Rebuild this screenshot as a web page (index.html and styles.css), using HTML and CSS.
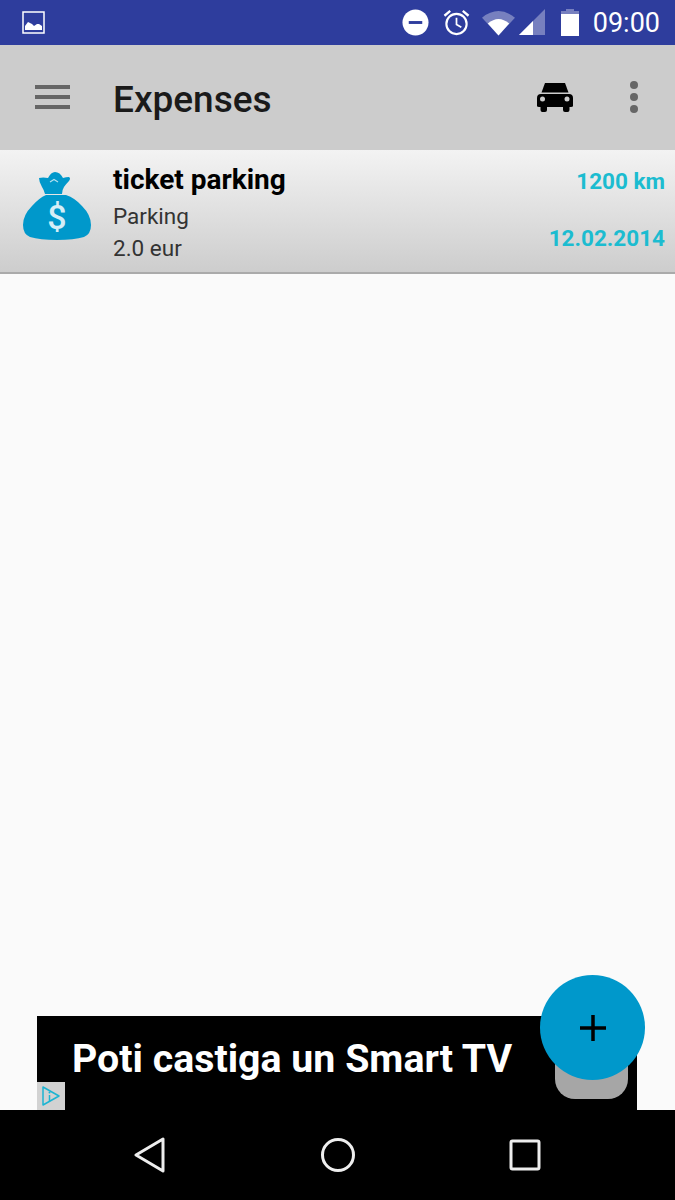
FILE: index.html
```html
<!DOCTYPE html>
<html lang="en">
<head>
    <meta charset="UTF-8">
    <meta name="viewport" content="width=device-width, initial-scale=1.0">
    <link rel="stylesheet" href="styles.css">
    <title>Expenses</title>
</head>
<body>
    <div class="screen">
        <div class="status-bar">
            <svg class="status-picture" width="24" height="24" viewBox="0 0 24 24">
                <rect x="1" y="1" width="21" height="21" fill="none" stroke="#fff" stroke-width="1.5"/>
                <path d="M3 19v-4l3-4 2 1 2 1 2 2 3-2 2 0 3 2v4z" fill="#fff"/>
            </svg>
            <div class="status-right">
                <svg class="status-dnd" width="27" height="27" viewBox="0 0 28 28">
                    <circle cx="14" cy="14" r="13.5" fill="#fff"/>
                    <rect x="7" y="12.5" width="14" height="3" fill="#2e3d9d"/>
                </svg>
                <svg class="status-alarm" width="27" height="27" viewBox="0 0 28 28">
                    <circle cx="14" cy="15.5" r="10.5" fill="none" stroke="#fff" stroke-width="2.2"/>
                    <path d="M14 9v7l5 3" fill="none" stroke="#fff" stroke-width="1.8"/>
                    <path d="M1.5 7l6-5M26.5 7l-6-5" fill="none" stroke="#fff" stroke-width="2.4"/>
                </svg>
                <svg class="status-wifi" width="33" height="26" viewBox="0 0 34 26">
                    <path d="M0 7.500Q17-6 34 7.500L17 26z" fill="#fff" fill-opacity="0.35"/>
                    <path d="M6 13.500Q17 4 28 13.500L17 26z" fill="#fff"/>
                </svg>
                <svg class="status-signal" width="26" height="27" viewBox="0 0 26 27">
                    <path d="M0 26L26 0v26z" fill="#fff" fill-opacity="0.35"/>
                    <path d="M0 26L14 12v14z" fill="#fff"/>
                </svg>
                <svg class="status-battery" width="18" height="27" viewBox="0 0 18 27">
                    <path d="M5 0h8v2h5v4H0V2h5z" fill="#fff" fill-opacity="0.35"/>
                    <rect y="5" width="18" height="22" fill="#fff"/>
                </svg>
                <span class="status-time">09:00</span>
            </div>
        </div>

        <header class="toolbar">
            <div class="menu-icon">
                <span></span>
                <span></span>
                <span></span>
            </div>
            <h1 class="toolbar-title">Expenses</h1>
            <svg class="car-icon" width="36" height="29" viewBox="0 0 36 29">
                <path d="M8 0h20l3.500 9.500H4.500z" fill="#000"/>
                <path d="M4 11h28q4 0 4 4v8q0 1-3.500 1v3q0 2-2 2H28q-2 0-2-2v-3H10v3q0 2-2 2H5.500q-2 0-2-2v-3Q0 24 0 23v-8q0-4 4-4z" fill="#000"/>
                <circle cx="5.500" cy="16" r="2.500" fill="#ccc"/>
                <circle cx="30" cy="16" r="2.500" fill="#ccc"/>
            </svg>
            <div class="more-icon">
                <span></span>
                <span></span>
                <span></span>
            </div>
        </header>

        <main class="expense-list">
            <div class="expense-row">
                <svg class="expense-icon" width="70" height="70" viewBox="0 0 70 70">
                    <path d="M17 7q4-1 9 0 3-6 7-6 5 0 8 6 3-1 6-1 2 1 0 4-3 3-5 6-2 3-2 7H23q-1-4-3-7-3-5-3-9z" fill="#0098cb"/>
                    <path d="M28 11l4-2.500 4 2.500" fill="none" stroke="#fff" stroke-width="1.200" opacity="0.7"/>
                    <path d="M24 24h20q9 3 16 11 9 9 9 19 0 9-7 12-10 3-27 3T8 66q-7-3-7-12 0-10 9-19 7-8 14-11z" fill="#0098cb"/>
                    <text class="expense-dollar" x="35" y="58" text-anchor="middle">$</text>
                </svg>
                <div class="expense-info">
                    <div class="expense-title">ticket parking</div>
                    <div class="expense-line">Parking</div>
                    <div class="expense-line">2.0 eur</div>
                </div>
                <div class="expense-meta">
                    <div>1200 km</div>
                    <div>12.02.2014</div>
                </div>
            </div>
        </main>

        <div class="ad-wrap">
            <div class="ad">
                <span class="ad-text">Poti castiga un Smart TV</span>
                <div class="ad-button"></div>
                <div class="ad-badge">
                    <svg width="20" height="22" viewBox="0 0 20 22">
                        <path d="M2 2l16 9-16 9z" fill="none" stroke="#1cb4d2" stroke-width="1.500" stroke-linejoin="round"/>
                        <path d="M8.500 10v6" stroke="#1cb4d2" stroke-width="1.500"/>
                        <circle cx="8.500" cy="7.500" r="1" fill="#1cb4d2"/>
                    </svg>
                </div>
            </div>
            <button class="fab">
                <svg width="28" height="28" viewBox="0 0 28 28">
                    <path d="M14 1v26M1 14h26" stroke="#000" stroke-width="3.500"/>
                </svg>
            </button>
        </div>

        <nav class="nav-bar">
            <svg width="32" height="36" viewBox="0 0 32 36">
                <path d="M29 2v32L2 18z" fill="none" stroke="#eee" stroke-width="3" stroke-linejoin="round"/>
            </svg>
            <svg width="36" height="36" viewBox="0 0 36 36">
                <circle cx="18" cy="18" r="15.500" fill="none" stroke="#eee" stroke-width="3"/>
            </svg>
            <svg width="32" height="32" viewBox="0 0 32 32">
                <rect x="2" y="2" width="28" height="28" rx="1.500" fill="none" stroke="#eee" stroke-width="3"/>
            </svg>
        </nav>
    </div>
</body>
</html>
```
FILE: styles.css
```css
body {
    margin: 0;
    font-family: Roboto, sans-serif;
    background-color: #fafafa;
}

.screen {
    display: flex;
    flex-direction: column;
    height: 1200px;
    overflow: hidden;
}

.status-bar {
    height: 45px;
    flex-shrink: 0;
    background-color: #2e3d9d;
    display: flex;
    align-items: center;
    justify-content: space-between;
    padding: 0 15px 0 22px;
}

.status-picture {
    display: block;
}

.status-right {
    display: flex;
    align-items: center;
    color: #fff;
}

.status-dnd {
    margin-right: 14px;
}

.status-alarm {
    margin-right: 12px;
}

.status-wifi {
    margin-right: 4px;
}

.status-signal {
    margin-right: 16px;
}

.status-battery {
    margin-right: 14px;
}

.status-time {
    font-size: 27px;
    line-height: 30px;
}

.toolbar {
    height: 105px;
    flex-shrink: 0;
    background-color: #ccc;
    display: flex;
    align-items: center;
    padding: 0 37px 0 35px;
}

.menu-icon {
    width: 35px;
    display: flex;
    flex-direction: column;
    gap: 6px;
    margin-right: 43px;
    margin-top: -1px;
}

.menu-icon span {
    height: 4px;
    background-color: #666;
}

.toolbar-title {
    flex: 1;
    margin: 3px 0 0;
    font-size: 37px;
    font-weight: 500;
    color: #1a1a1a;
}

.car-icon {
    margin-right: 57px;
    margin-top: 0;
}

.more-icon {
    display: flex;
    flex-direction: column;
    gap: 4px;
    margin-top: -1px;
}

.more-icon span {
    width: 8px;
    height: 8px;
    border-radius: 50%;
    background-color: #666;
}

.expense-list {
    flex: 1;
}

.expense-row {
    height: 122px;
    background: linear-gradient(#f3f3f3, #cdcdcd);
    border-bottom: 2px solid #aaa;
    display: flex;
    align-items: flex-start;
    padding-right: 10px;
}

.expense-icon {
    margin: 21px 21px 0 22px;
    flex-shrink: 0;
}

.expense-dollar {
    font-family: Roboto, sans-serif;
    font-size: 34px;
    font-weight: 500;
    fill: #d5eef7;
}

.expense-info {
    flex: 1;
    padding-top: 12px;
    color: #333;
}

.expense-title {
    font-size: 28px;
    font-weight: 700;
    line-height: 36px;
    color: #000;
}

.expense-line {
    font-size: 22.500px;
    line-height: 32px;
}

.expense-line:nth-child(2) {
    margin-top: 2px;
}

.expense-meta {
    padding-top: 16px;
    text-align: right;
    font-size: 22.500px;
    font-weight: 700;
    line-height: 30px;
    color: #1cbcd0;
}

.expense-meta div + div {
    margin-top: 27px;
}

.ad-wrap {
    position: relative;
    padding: 0 38px 0 37px;
    flex-shrink: 0;
}

.ad {
    position: relative;
    height: 94px;
    background-color: #000;
    display: flex;
    align-items: center;
    padding-left: 35px;
}

.ad-text {
    font-size: 39.300px;
    font-weight: 700;
    color: #fff;
    margin-top: -8px;
}

.ad-button {
    position: absolute;
    right: 9px;
    bottom: 11px;
    width: 73px;
    height: 60px;
    border-radius: 20px;
    background-color: #a6a6a6;
}

.ad-badge {
    position: absolute;
    left: 0;
    bottom: 0;
    width: 28px;
    height: 28px;
    background-color: #d2d2d2;
    display: flex;
    align-items: center;
    justify-content: center;
}

.fab {
    position: absolute;
    right: 30px;
    top: -41px;
    width: 105px;
    height: 105px;
    border: none;
    border-radius: 50%;
    padding: 0;
    background-color: #0098cb;
    display: flex;
    align-items: center;
    justify-content: center;
}

.nav-bar {
    height: 90px;
    flex-shrink: 0;
    background-color: #000;
    display: flex;
    align-items: center;
    justify-content: space-between;
    padding: 0 134px;
}
```
